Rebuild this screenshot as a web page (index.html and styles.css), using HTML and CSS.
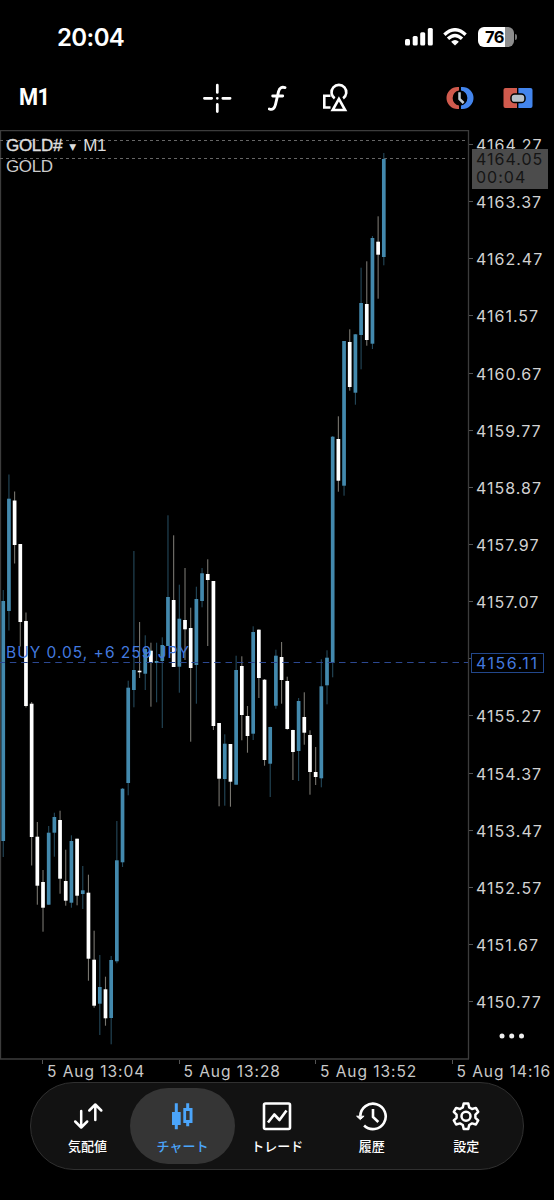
FILE: index.html
```html
<!DOCTYPE html>
<html lang="ja">
<head>
<meta charset="utf-8">
<title>GOLD# M1</title>
<link rel="stylesheet" href="styles.css">
</head>
<body>
<div class="app">
  <header class="status">
    <span class="clock">20:04</span>
    <div class="status-icons">
      <svg class="signal" width="28" height="18" viewBox="0 0 28 18" fill="#fff"><rect x="0" y="11" width="5" height="6.5" rx="1.5"/><rect x="7.7" y="8" width="5" height="9.5" rx="1.5"/><rect x="15.2" y="4.3" width="5" height="13.2" rx="1.5"/><rect x="22.8" y="0" width="5" height="17.5" rx="1.5"/></svg>
      <svg class="wifi" width="24" height="18" viewBox="0 0 24 18"><g fill="none" stroke="#fff" stroke-width="3.4"><path d="M1.4 6.7Q12-3.2 22.6 6.7"/><path d="M5 10.8Q12 4.2 19 10.8"/></g><path fill="#fff" d="M8.1 13.7Q12 10.2 15.9 13.7L12 17.6Z"/></svg>
      <div class="battery"><span>76</span></div><i class="nub"></i>
    </div>
  </header>

  <nav class="toolbar">
    <span class="timeframe">M1</span>
    <svg class="tool cross" width="30" height="30" viewBox="0 0 30 30" stroke="#fff" stroke-width="2.7" stroke-linecap="round"><path d="M15.3 2.2v7.2M15.3 21.4v7.2M2.4 15.3h7.3M20.8 15.3h7.3M15.3 15.3h.01"/></svg>
    <svg class="tool func" width="22" height="30" viewBox="0 0 22 30" fill="none" stroke="#fff" stroke-width="2.9" stroke-linecap="round"><path d="M1.300 26C4.800 27.300 6.500 25.500 7.500 21.500L10.500 8.600C11.600 4.400 14 3.700 17 4.600M4.700 13h10"/></svg>
    <svg class="tool objects" width="30" height="30" viewBox="0 0 30 30" fill="none" stroke="#fff" stroke-width="2.6"><path d="M9.500 12.700H3.300V24.500H9.500M13.700 15.400A7.400 7.400 0 1 1 22.100 15.400"/><path d="M17.900 15.900L24.100 27H11.700Z"/></svg>
    <svg class="tool split-clock" width="30" height="24" viewBox="0 0 30 24"><path d="M14 1H12.500A11 11 0 0 0 12.500 23H14V19.500A7.600 7.600 0 0 1 14 4.500Z" fill="#d05a4d"/><path d="M16 1H17.500A11 11 0 0 1 17.500 23H16V19.500A7.600 7.600 0 0 0 16 4.500Z" fill="#4385ed"/><path d="M14.500 6.300V13L18.600 17" fill="none" stroke="#c2cad2" stroke-width="2.5"/></svg>
    <svg class="tool split-box" width="30" height="22" viewBox="0 0 30 22"><path d="M2.500 1H14V21H2.500Q.5 21 .5 19V3Q.5 1 2.500 1Z" fill="#d05a4d"/><path d="M15.400 1H27.500Q29.500 1 29.500 3V19Q29.500 21 27.500 21H15.400Z" fill="#4385ed"/><rect x="8" y="7" width="14" height="8.500" rx="3.600" fill="#b7c0c8" stroke="#000" stroke-width="1.500"/></svg>
  </nav>

  <main class="chart">
    <section class="plot">
      <svg id="candles" width="470" height="930" viewBox="0 130 470 930">
        <path class="frame" d="M.5 1059V130.500H468.500V1059M0 1059H469"/>
        <path class="quote" d="M0 140.500H468M0 158.500H468"/>
        <g id="bars"></g>
        <path class="entry" d="M-1.500 662.500H468"/>
      </svg>
      <div class="symbol"><b>GOLD#</b><i>▼</i><span>M1</span></div>
      <div class="description">GOLD</div>
      <div class="position">BUY 0.05, +6 259 JPY</div>
    </section>
    <aside class="prices">
      <span>4164.27</span><span>4163.37</span><span>4162.47</span><span>4161.57</span><span>4160.67</span><span>4159.77</span><span>4158.87</span><span>4157.97</span><span>4157.07</span><span></span><span>4155.27</span><span>4154.37</span><span>4153.47</span><span>4152.57</span><span>4151.67</span><span>4150.77</span>
      <div class="current">4164.05<br>00:04</div>
      <div class="open-price">4156.11</div>
      <svg class="more" width="26" height="6" viewBox="0 0 26 6" fill="#eee"><circle cx="3" cy="3" r="2.500"/><circle cx="12.700" cy="3" r="2.500"/><circle cx="22.500" cy="3" r="2.500"/></svg>
    </aside>
  </main>
  <div class="times"><span>5 Aug 13:04</span><span>5 Aug 13:28</span><span>5 Aug 13:52</span><span>5 Aug 14:16</span></div>

  <footer class="tabs">
    <div class="tab"><svg width="32" height="32" viewBox="0 0 32 32" fill="none" stroke="#fff" stroke-width="2.500" stroke-linecap="round" stroke-linejoin="round"><path d="M9.200 11V27M3.200 21.500L9.200 27.500L15.200 21.500M23.300 20V5M17.300 10.500L23.300 4.500L29.300 10.500"/></svg><span>気配値</span></div>
    <div class="tab active"><svg width="32" height="32" viewBox="0 0 32 32" fill="#4ba5fb"><path d="M7.800 3.300h3V12h2.900v13h-2.900v4.300h-3V25H5V12h2.800Z"/><path fill-rule="evenodd" d="M19.200 3.300h3V8H25.500v15h-3.300v3.300h-3V23H16.300V8h2.900ZM19.100 11v9h3.500v-9Z"/></svg><span>チャート</span></div>
    <div class="tab"><svg width="32" height="32" viewBox="0 0 32 32" fill="none" stroke="#fff" stroke-width="2.600" stroke-linejoin="round"><rect x="3" y="3.500" width="26" height="25.500" rx="1.500"/><path d="M7 22.500L13.300 14.500L18.500 20L25.500 10.500"/></svg><span>トレード</span></div>
    <div class="tab"><svg width="32" height="32" viewBox="0 0 32 32" fill="none" stroke="#fff" stroke-width="2.600"><path d="M4.300 16A12.700 12.700 0 1 1 8.100 25.500M17 9V17L22.300 22"/><path d="M.6 16.200H8.100L4.300 19.600Z" fill="#fff" stroke-width="1"/></svg><span>履歴</span></div>
    <div class="tab"><svg width="32" height="32" viewBox="0 0 32 32" fill="none" stroke="#fff" stroke-width="2.500" stroke-linejoin="round"><path d="M13.700 3.500H18.300L19.200 7.400L22 9L25.900 7.900L28.200 11.900L25.400 14.600V17.800L28.200 20.500L25.900 24.500L22 23.400L19.200 25L18.300 28.900H13.700L12.800 25L10 23.400L6.100 24.500L3.800 20.500L6.600 17.800V14.600L3.800 11.900L6.100 7.900L10 9L12.800 7.400Z"/><circle cx="16" cy="16.200" r="4.500"/></svg><span>設定</span></div>
  </footer>
</div>
<script src="chart.js"></script>
</body>
</html>
```
FILE: styles.css
```css
* { box-sizing: border-box; }
body { margin: 0; background: #000; color: #fff; font-family: Inter, "Noto Sans CJK JP", sans-serif; }
.app { width: 554px; height: 1200px; display: flex; flex-direction: column; overflow: hidden; }
svg { display: block; flex: none; }

.status { height: 74px; flex: none; display: flex; justify-content: space-between; padding: 0 37px 0 57px; }
.clock { font-size: 24px; font-weight: 600; line-height: 30px; padding-top: 23px; letter-spacing: -.6px; }
.status-icons { display: flex; padding-top: 27px; }
.signal { margin: 1px 10px 0 0; }
.wifi { margin: 1px 11px 0 0; }
.battery { width: 36px; height: 20px; border-radius: 6px; background: linear-gradient(90deg, #fff 27px, #8d8d8d 27px); color: #000; font-size: 16.500px; font-weight: 700; line-height: 20px; padding-left: 7px; letter-spacing: -.6px; }
.nub { width: 2px; height: 6px; margin: 7px 0 0 1px; border-radius: 0 2px 2px 0; background: #777; }

.toolbar { height: 56px; flex: none; display: flex; align-items: flex-start; padding-left: 19px; }
.timeframe { width: 183px; padding-top: 10px; font: 700 23px/28px Roboto, sans-serif; letter-spacing: -.6px; transform: scaleX(.95); transform-origin: left; }
.cross { margin-top: 9px; }
.func { margin: 9px 0 0 36px; }
.objects { margin: 9px 0 0 31px; }
.split-clock { margin: 12px 0 0 94px; }
.split-box { margin: 13px 0 0 28px; }

.chart { height: 930px; flex: none; display: flex; }
.plot { width: 470px; position: relative; }
.frame { fill: none; stroke: #3c3c3c; stroke-width: 1.3; }
.quote { stroke: #666; stroke-dasharray: 3 3; }
.entry { stroke: #2c4891; stroke-dasharray: 6.500 4.850; }
.up { fill: #4389ad; }
.down { fill: #fff; }
.up-wick { fill: #24485a; }
.down-wick { fill: #77756f; }
.symbol, .description, .position { position: absolute; left: 6px; white-space: nowrap; line-height: 20px; }
.symbol { top: 6px; display: flex; font-family: "Liberation Sans", sans-serif; font-size: 17px; letter-spacing: -.3px; color: #ddd; }
.symbol b { font-weight: 400; -webkit-text-stroke: .4px #ddd; }
.symbol i { font: 9px/22px "DejaVu Sans", sans-serif; width: 21px; text-align: center; }
.description { top: 27px; font-family: "Liberation Sans", sans-serif; font-size: 17px; color: #ccc; letter-spacing: -.4px; }
.position { top: 513px; font-size: 15.500px; letter-spacing: 1px; color: #4379df; }

.prices { width: 84px; position: relative; display: flex; flex-direction: column; padding-top: 5px; font-size: 16px; letter-spacing: 1px; line-height: 20px; color: #d2d2d2; }
.prices > span { height: 57.150px; flex: none; display: flex; align-items: flex-start; }
.prices > span::before { content: ""; width: 4px; height: 1px; background: #555; margin: 9px 3px 0 -1px; }
.current { position: absolute; left: 2px; top: 19px; width: 76px; height: 40px; padding-left: 4px; background: #4c4c4c; color: #151515; line-height: 18px; padding-top: 1px; }
.open-price { position: absolute; left: 1px; top: 523px; width: 73px; height: 20px; padding-left: 4px; border: 1px solid #22478b; color: #4379df; line-height: 18px; letter-spacing: 1.500px; background: #000; }
.more { position: absolute; left: 29px; top: 903px; }

.times { height: 22px; flex: none; display: flex; padding-left: 42px; color: #c9c9c9; font-size: 15.500px; letter-spacing: .95px; }
.times span { width: 136.500px; flex: none; display: flex; line-height: 23px; white-space: pre; }
.times span::before { content: ""; width: 1px; height: 4px; background: #555; margin-right: 4px; }

.tabs { width: 494px; height: 88px; flex: none; margin-left: 30px; display: flex; padding: 5px 4px; border: 1px solid #303030; border-radius: 44px; background: #121212; }
.tab { width: 94.500px; display: flex; flex-direction: column; align-items: center; padding-top: 12px; font: 500 13px/20px Inter, "Noto Sans CJK JP", sans-serif; flex: none; }
.tab span { margin-top: 4px; }
.tab:first-child { width: 95px; padding-left: 10px; }
.active { width: 105px; height: 76px; margin-right: -5px; border-radius: 38px; background: #353535; color: #4ba5fb; }
```
FILE: chart.js
```javascript
// Each row: direction, high, body top, body bottom, low.
const rows = `
u 590 601 841 857
u 474.5 498.7 611 630.5
d 491.5 500.5 545 563.5
d 544 544 622 646.5
d 612.5 621 706 707.5
d 702 703.7 837 865.5
d 822 836.7 885.7 904.7
d 870 882 907.7 931.7
u 826 832.7 904.7 905
u 812.7 817 832.7 856.7
d 810.7 820 878.7 893.7
d 849.7 881 900.7 905.7
u 835.3 841 902.7 907.7
d 838.7 838.7 895.7 905.3
u 866 890.3 894 909
d 874.7 892.7 958.7 980.7
d 930.7 959.7 1005.7 1007.7
u 955 987 1003.7 1035
d 976.7 989.3 1018.3 1025.7
u 956 960 1018 1044.3
u 821 860.3 961.3 963.3
u 788 788.7 862.3 867
u 680.7 687.7 783 795.3
u 551 670 690 707.3
d 622 670.7 672.3 678
u 635.3 649 673.7 690
d 642.7 650.7 663 706.7
u 642.7 661 663 702.3
u 637.3 645 661 728
u 515.3 597 646 646
d 535.3 600 667 667
u 584.7 618.7 666.7 692.7
d 568 620 629.3 660
d 607.7 628 668 741.7
u 586.7 599 665 703.7
u 568 573.3 601 607.3
d 559.3 574 580 646
d 581 581 726 730
d 723 723 778.7 806.3
u 734.3 743.7 779 805.7
d 744 744 781.7 806.7
u 655.7 670 784.7 784.7
d 656.3 666 715 740.3
d 706 716 736 752.7
u 626.3 632 733.7 740
d 629.3 629.7 678 698
d 679 679.7 760 765.7
u 726.7 727 763.7 797
u 649.7 655.7 705.7 708.7
d 642 657 680 703.7
d 676.7 681 729 729.7
d 729.7 730 752 780
u 698 701 751 781
d 692.3 717 732.7 744.7
d 730.3 735 772 794.7
d 747 772 777 785
u 659.3 686.3 778.3 787.3
u 650.3 657.7 685.3 704.3
u 436 436.7 663 677.3
d 416.3 439 480.7 491.7
u 341 341 485.7 495.7
d 329.3 342 387 390.7
u 334 334.3 392.7 404.7
u 267.7 303 335 369.3
d 261.3 304 340 345.7
u 236 238 343.7 349
d 216.3 241.7 254.7 298.7
u 153 159 257 265.3
`.trim().split("\n").map(line => line.split(" "));

const bars = document.getElementById("bars");

function addRect(x, top, width, bottom, className) {
  const rect = document.createElementNS("http://www.w3.org/2000/svg", "rect");
  rect.setAttribute("x", x);
  rect.setAttribute("y", top);
  rect.setAttribute("width", width);
  rect.setAttribute("height", bottom - top);
  rect.setAttribute("class", className);
  bars.appendChild(rect);
}

rows.forEach(([dir, high, top, bottom, low], i) => {
  const x = 3.2 + i * 5.68;
  const kind = dir === "u" ? "up" : "down";
  addRect(x - 0.5, high, 1.1, low, kind + "-wick");
  addRect(x - 1.8, top, 3.7, bottom, kind);
});
```
